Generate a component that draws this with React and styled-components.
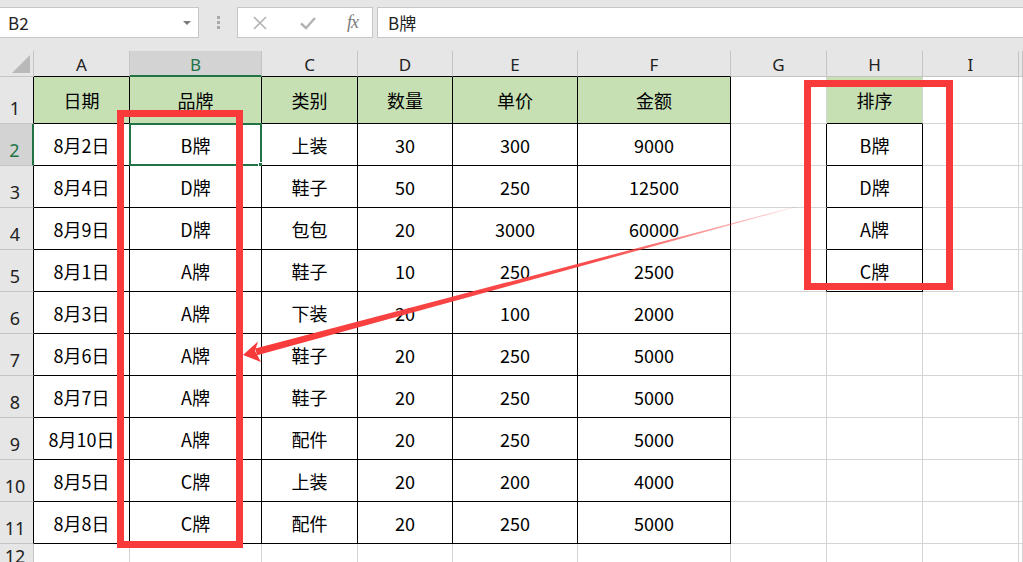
import React from "react";
import styled, { createGlobalStyle } from "styled-components";

const GlobalStyle = createGlobalStyle`
  html, body {
    margin: 0;
    padding: 0;
    background: #ffffff;
  }
  body {
    font-family: "Noto Sans CJK SC", "Noto Sans", sans-serif;
  }
`;

const GRID = "#d4d4d4";
const HEAD_LINE = "#c4c4c4";
const EXCEL_GREEN = "#217346";
const RED = "#f93a3a";

const columns = ["A", "B", "C", "D", "E", "F", "G", "H", "I", ""];

const rows = [
  ["日期", "品牌", "类别", "数量", "单价", "金额", "", "排序"],
  ["8月2日", "B牌", "上装", "30", "300", "9000", "", "B牌"],
  ["8月4日", "D牌", "鞋子", "50", "250", "12500", "", "D牌"],
  ["8月9日", "D牌", "包包", "20", "3000", "60000", "", "A牌"],
  ["8月1日", "A牌", "鞋子", "10", "250", "2500", "", "C牌"],
  ["8月3日", "A牌", "下装", "20", "100", "2000"],
  ["8月6日", "A牌", "鞋子", "20", "250", "5000"],
  ["8月7日", "A牌", "鞋子", "20", "250", "5000"],
  ["8月10日", "A牌", "配件", "20", "250", "5000"],
  ["8月5日", "C牌", "上装", "20", "200", "4000"],
  ["8月8日", "C牌", "配件", "20", "250", "5000"],
  [],
];

// r and c are 1-based (row 1 = header row, column 1 = A)
const inTable = (r, c) =>
  (c >= 1 && c <= 6 && r >= 1 && r <= 11) || (c === 8 && r >= 2 && r <= 5);

const isFilled = (r, c) => r === 1 && ((c >= 1 && c <= 6) || c === 8);

export default function App() {
  return (
    <>
      <GlobalStyle />
      <Page>
        <Toolbar>
          <NameBox>
            <span>B2</span>
            <Caret />
          </NameBox>
          <Grip>
            <i />
            <i />
            <i />
          </Grip>
          <FxBox>
            <svg width="16" height="16" viewBox="0 0 16 16">
              <path d="M2 2 L14 14 M14 2 L2 14" stroke="#b3b3b3" strokeWidth="1.6" fill="none" />
            </svg>
            <svg width="18" height="16" viewBox="0 0 18 16">
              <path d="M2 8.5 L7 13 L16 3" stroke="#b3b3b3" strokeWidth="2.4" fill="none" />
            </svg>
            <FxText>fx</FxText>
          </FxBox>
          <FormulaInput>B牌</FormulaInput>
        </Toolbar>

        <Sheet>
          <Corner>
            <CornerTriangle />
          </Corner>
          {columns.map((col, i) => (
            <ColHead key={col + i} $sel={col === "B"} $bb={inTable(1, i + 1)}>
              {col}
            </ColHead>
          ))}

          {rows.map((cells, ri) => {
            const r = ri + 1;
            return (
              <React.Fragment key={r}>
                <RowHead $sel={r === 2} $rb={inTable(r, 1)} $short={r === 12}>
                  {r}
                </RowHead>
                {columns.map((_, ci) => {
                  const c = ci + 1;
                  return (
                    <Cell
                      key={c}
                      $rb={inTable(r, c) || inTable(r, c + 1)}
                      $bb={inTable(r, c) || inTable(r + 1, c)}
                      $fill={isFilled(r, c)}
                      $active={r === 2 && c === 2}
                    >
                      {cells[ci] || ""}
                    </Cell>
                  );
                })}
              </React.Fragment>
            );
          })}
        </Sheet>

        <Annotation width="1023" height="562" viewBox="0 0 1023 562">
          <defs>
            <linearGradient id="fade" gradientUnits="userSpaceOnUse" x1="795" y1="207" x2="256" y2="352">
              <stop offset="0" stopColor={RED} stopOpacity="0.15" />
              <stop offset="0.35" stopColor={RED} stopOpacity="0.9" />
              <stop offset="1" stopColor={RED} stopOpacity="1" />
            </linearGradient>
          </defs>
          <rect x="120.5" y="113.5" width="119" height="431" fill="none" stroke={RED} strokeWidth="7" />
          <rect x="807.5" y="83.5" width="142" height="203" fill="none" stroke={RED} strokeWidth="7" />
          <polygon
            points="795.1,207.3 794.9,206.7 255.2,348.6 257.0,355.2"
            fill="url(#fade)"
          />
          <polygon points="243,355 258,341.5 255,351 261,362" fill={RED} />
        </Annotation>
      </Page>
    </>
  );
}

const Page = styled.div`
  position: relative;
  width: 1023px;
  height: 562px;
  overflow: hidden;
  background: #e6e6e6;
`;

const Toolbar = styled.div`
  height: 51px;
  display: flex;
  align-items: flex-start;
  padding-top: 7px;
  box-sizing: border-box;
`;

const NameBox = styled.div`
  width: 199px;
  height: 31px;
  box-sizing: border-box;
  background: #ffffff;
  border: 1px solid #c6c6c6;
  border-left: none;
  display: flex;
  align-items: center;
  justify-content: space-between;
  padding: 0 7px 0 8px;
  font-family: "Noto Sans CJK SC", "Noto Sans", sans-serif;
  font-size: 17px;
  color: #222;
`;

const Caret = styled.span`
  width: 0;
  height: 0;
  border-left: 4px solid transparent;
  border-right: 4px solid transparent;
  border-top: 4px solid #7a7a7a;
`;

const Grip = styled.div`
  width: 38px;
  height: 31px;
  display: flex;
  flex-direction: column;
  align-items: center;
  justify-content: center;
  gap: 2px;

  i {
    display: block;
    width: 3px;
    height: 3px;
    background: #a9a9a9;
  }
`;

const FxBox = styled.div`
  width: 136px;
  height: 31px;
  box-sizing: border-box;
  background: #ffffff;
  border: 1px solid #c6c6c6;
  display: flex;
  align-items: center;
  justify-content: space-between;
  padding: 0 14px 0 14px;
`;

const FxText = styled.span`
  font-family: "Liberation Serif", serif;
  font-style: italic;
  font-size: 18px;
  color: #7b7b7b;
  letter-spacing: -1px;
`;

const FormulaInput = styled.div`
  flex: 1;
  margin-left: 4px;
  height: 31px;
  box-sizing: border-box;
  background: #ffffff;
  border: 1px solid #c6c6c6;
  border-right: none;
  display: flex;
  align-items: center;
  padding-left: 10px;
  font-size: 17px;
  color: #222;
`;

const Sheet = styled.div`
  display: grid;
  grid-template-columns: 34px 96px 132px 96px 95px 125px 153px 96px 96px 96px 1fr;
  grid-template-rows: 26px 47px repeat(10, 42px) 22px;
  background: #ffffff;
`;

const Corner = styled.div`
  position: relative;
  background: #e6e6e6;
  box-sizing: border-box;
  border-right: 1px solid ${HEAD_LINE};
  border-bottom: 1px solid ${HEAD_LINE};
`;

const CornerTriangle = styled.div`
  position: absolute;
  right: 3px;
  bottom: 3px;
  width: 0;
  height: 0;
  border-left: 18px solid transparent;
  border-bottom: 18px solid #b9b9b9;
`;

const ColHead = styled.div`
  box-sizing: border-box;
  background: ${(p) => (p.$sel ? "#d3d3d3" : "#e6e6e6")};
  color: ${(p) => (p.$sel ? EXCEL_GREEN : "#222")};
  border-right: 1px solid ${HEAD_LINE};
  border-bottom: ${(p) =>
    p.$sel ? `2px solid ${EXCEL_GREEN}` : `1px solid ${p.$bb ? "#000" : HEAD_LINE}`};
  display: flex;
  align-items: center;
  justify-content: center;
  font-family: "Noto Sans", "Noto Sans CJK SC", sans-serif;
  font-size: 17px;
  line-height: 1;
  padding-top: 2px;
`;

const RowHead = styled.div`
  box-sizing: border-box;
  background: ${(p) => (p.$sel ? "#d3d3d3" : "#e6e6e6")};
  color: ${(p) => (p.$sel ? EXCEL_GREEN : "#222")};
  border-bottom: 1px solid ${HEAD_LINE};
  border-right: ${(p) =>
    p.$sel ? `2px solid ${EXCEL_GREEN}` : `1px solid ${p.$rb ? "#000" : HEAD_LINE}`};
  display: flex;
  align-items: ${(p) => (p.$short ? "flex-start" : "flex-end")};
  justify-content: center;
  padding: ${(p) => (p.$short ? "3px 3px 0 0" : "0 3px 6px 0")};
  font-family: "Noto Sans", "Noto Sans CJK SC", sans-serif;
  font-size: 18px;
  line-height: 1;
`;

const Cell = styled.div`
  position: relative;
  box-sizing: border-box;
  background: ${(p) => (p.$fill ? "#c6e0b4" : "#ffffff")};
  border-right: 1px solid ${(p) => (p.$rb ? "#000" : GRID)};
  border-bottom: 1px solid ${(p) => (p.$bb ? "#000" : GRID)};
  display: flex;
  align-items: center;
  justify-content: center;
  font-family: "Noto Sans CJK SC", "Noto Sans", sans-serif;
  font-size: 18px;
  line-height: 1;
  color: #000;
  white-space: nowrap;

  ${(p) =>
    p.$active &&
    `
    &::before {
      content: "";
      position: absolute;
      left: -1px;
      top: -1px;
      right: -1px;
      bottom: -1px;
      border: 2px solid ${EXCEL_GREEN};
    }
    &::after {
      content: "";
      position: absolute;
      right: -4px;
      bottom: -4px;
      width: 6px;
      height: 6px;
      background: ${EXCEL_GREEN};
      outline: 1px solid #ffffff;
    }
  `}
`;

const Annotation = styled.svg`
  position: absolute;
  left: 0;
  top: 0;
  pointer-events: none;
`;
